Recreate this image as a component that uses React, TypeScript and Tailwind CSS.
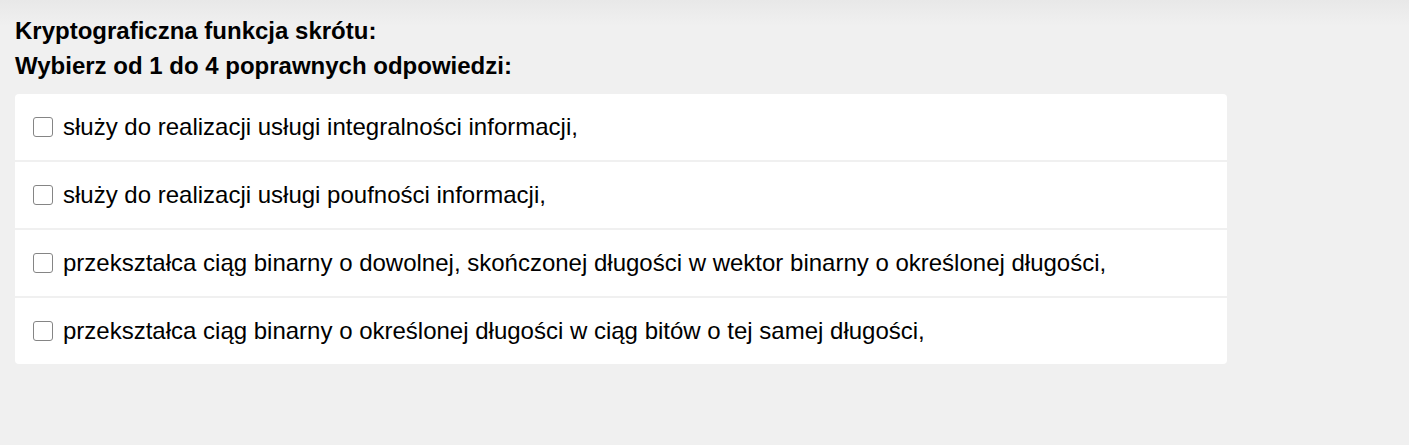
const answers = [
    {id: 1, text: 'służy do realizacji usługi integralności informacji,'},
    {id: 2, text: 'służy do realizacji usługi poufności informacji,'},
    {id: 3, text: 'przekształca ciąg binarny o dowolnej, skończonej długości w wektor binarny o określonej długości,'},
    {id: 4, text: 'przekształca ciąg binarny o określonej długości w ciąg bitów o tej samej długości,'},
]

export default function App() {
    return (
        <div
            className="min-h-[445px] bg-[linear-gradient(#e8e8e8,#f0f0f0_26px)] px-[15px] pt-[13px] text-black"
            style={{fontFamily: '"Liberation Sans", Arial, sans-serif'}}
        >
            <h2 className="text-[24px] font-bold leading-[35px]">Kryptograficzna funkcja skrótu:</h2>
            <h3 className="text-[24px] font-bold leading-[35px]">Wybierz od 1 do 4 poprawnych odpowiedzi:</h3>

            <div className="mt-[11px] w-[1212px] flex flex-col gap-[2px]">
                {answers.map((item, i) => (
                    <label
                        key={item.id}
                        className={
                            "flex items-center gap-[10px] h-[66px] pl-[18px] bg-white cursor-pointer " +
                            (i === 0 ? "rounded-t-[4px] " : "") +
                            (i === answers.length - 1 ? "rounded-b-[4px]" : "")
                        }
                    >
                        <span className="w-[20px] h-[20px] rounded-[3px] border border-[#858585] bg-white shrink-0"/>
                        <span className="text-[24px] leading-[28px]">{item.text}</span>
                    </label>
                ))}
            </div>
        </div>
    )
}
